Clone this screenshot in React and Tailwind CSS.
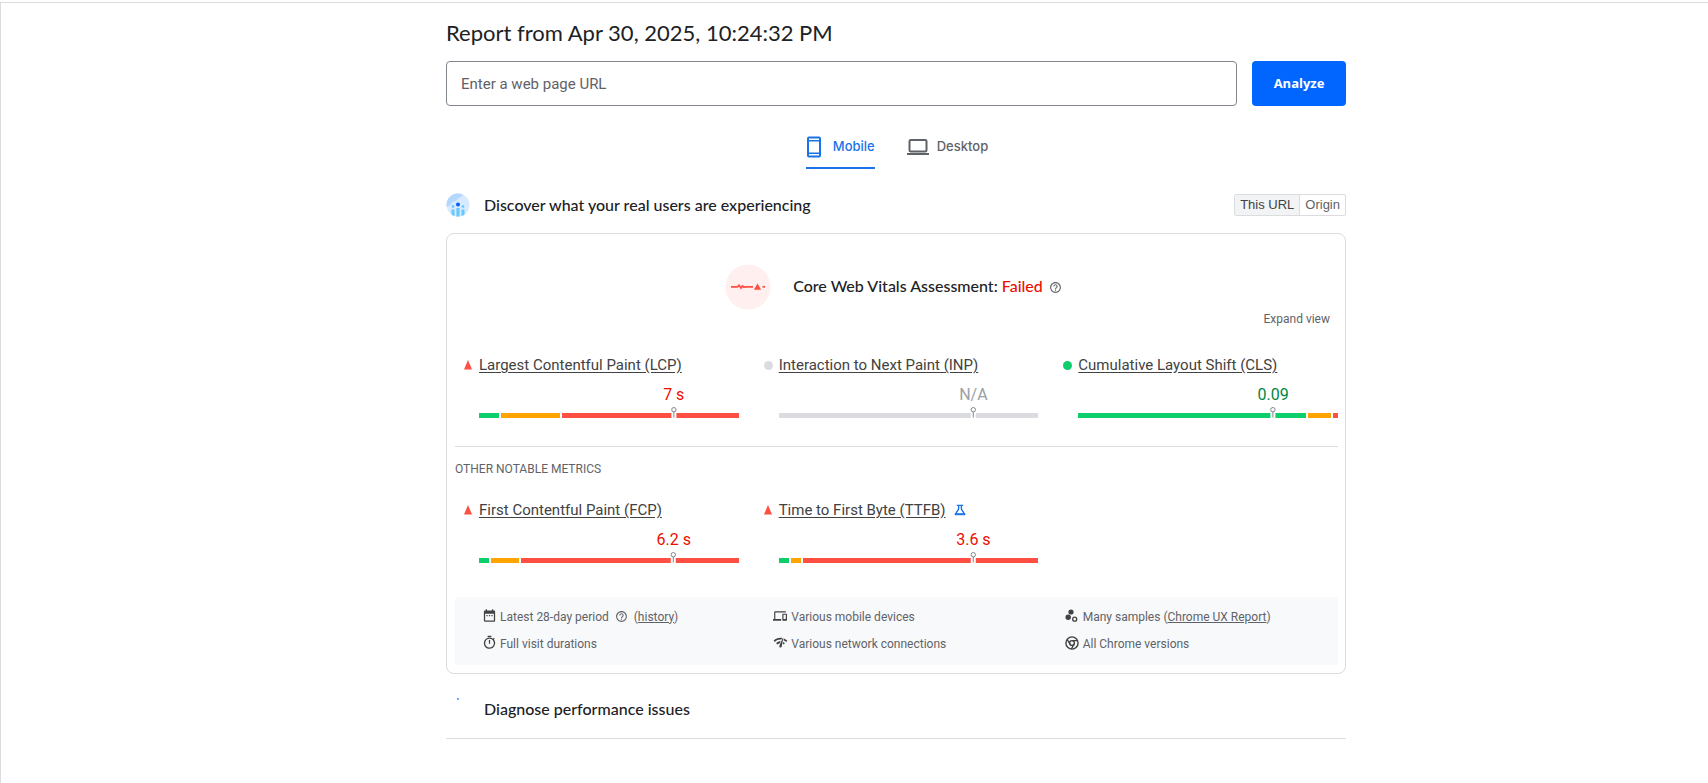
import React, { useState } from 'react';
import { MdDateRange, MdDevices, MdHelpOutline, MdNetworkCheck, MdOutlineTimer } from 'react-icons/md';

const coreMetrics = [
  { name: 'Largest Contentful Paint (LCP)', value: '7 s', rating: 'poor', bars: [8, 23, 69] },
  { name: 'Interaction to Next Paint (INP)', value: 'N/A', rating: 'none', bars: [] },
  { name: 'Cumulative Layout Shift (CLS)', value: '0.09', rating: 'good', bars: [89, 9, 2] },
];

const otherMetrics = [
  { name: 'First Contentful Paint (FCP)', value: '6.2 s', rating: 'poor', bars: [4, 11, 85] },
  { name: 'Time to First Byte (TTFB)', value: '3.6 s', rating: 'poor', bars: [4, 4, 92], experimental: true },
];

const barColors = ['bg-[#0cce6b]', 'bg-[#ffa400]', 'bg-[#ff4e42]'];

const valueColors = {
  poor: 'text-[#eb0f00]',
  good: 'text-[#018642]',
  none: 'text-[#9aa0a6]',
};

function MobileIcon() {
  return (
    <svg width="16" height="22" viewBox="0 0 16 22" fill="none" aria-hidden="true">
      <rect x="2" y="1.5" width="12" height="19" rx="1" stroke="#1a73e8" strokeWidth="2" />
      <path d="M2 4.8h12M2 17.2h12" stroke="#1a73e8" strokeWidth="1.6" />
    </svg>
  );
}

function DesktopIcon() {
  return (
    <svg width="22" height="18" viewBox="0 0 22 18" fill="none" aria-hidden="true">
      <rect x="2.5" y="2" width="17" height="11.5" rx="1.2" stroke="#5f6368" strokeWidth="2" />
      <path d="M0 16h22" stroke="#5f6368" strokeWidth="2" />
    </svg>
  );
}

function UsersIcon() {
  return (
    <svg width="24" height="24" viewBox="0 0 24 24" aria-hidden="true">
      <defs>
        <clipPath id="users-clip">
          <circle cx="12" cy="12" r="11.5" />
        </clipPath>
      </defs>
      <g clipPath="url(#users-clip)">
        <rect width="24" height="24" fill="#d8eafe" />
        <path d="M0 14V0h17c0 3-2 4-4 5-2 .5-2 3-5 3.5C5 9 5 13 0 14z" fill="#b3d7fd" />
        <circle cx="12" cy="11.5" r="2" fill="#0b5cff" />
        <circle cx="7" cy="13.5" r="1.3" fill="#5cc4f8" />
        <circle cx="17" cy="13.5" r="1.3" fill="#5cc4f8" />
        <path d="M10.4 15h3.2v9h-3.2zM5.5 16.5h3V24h-3zM15.5 16.5h3V24h-3z" fill="#68c8fa" />
      </g>
    </svg>
  );
}

function VitalsIcon() {
  return (
    <svg width="46" height="46" viewBox="0 0 46 46" fill="none" aria-hidden="true">
      <circle cx="23" cy="23" r="22.5" fill="#ffefee" />
      <path d="M6 22.8h6.5l1.5-1.5 2 2.7 1.5-2 1.5 1.3 1.5-.5H28" stroke="#ff4e42" strokeWidth="1.8" />
      <path d="M32.5 19.5l3.6 6.2h-7.2z" fill="#ff4e42" />
      <path d="M37.5 22.8H40" stroke="#ff4e42" strokeWidth="1.8" />
    </svg>
  );
}

function FlaskIcon() {
  return (
    <svg width="12" height="12" viewBox="0 0 12 12" fill="none" stroke="#1a73e8" strokeWidth="1.4" aria-hidden="true">
      <path d="M2.8 1.4h6.4M4.6 1.5v3.7L1.6 9.8M7.4 1.5v3.7l3 4.6" />
      <path d="M.7 10.2h10.6" strokeWidth="2" />
    </svg>
  );
}

function SamplesIcon() {
  return (
    <svg width="14" height="14" viewBox="0 0 14 14" aria-hidden="true">
      <circle cx="6" cy="3" r="2.6" fill="#424242" />
      <circle cx="3.2" cy="8.3" r="2.7" fill="#424242" />
      <circle cx="9.7" cy="10.2" r="2" fill="none" stroke="#424242" strokeWidth="1.3" />
    </svg>
  );
}

function ChromeIcon() {
  return (
    <svg width="14" height="14" viewBox="0 0 14 14" fill="none" stroke="#424242" strokeWidth="1.4" aria-hidden="true">
      <circle cx="7" cy="7" r="6.1" />
      <circle cx="7" cy="7" r="2.4" />
      <path d="M7 4.6h5.5M5 8.2L2.2 3.5M9 8.2L6.4 13" />
    </svg>
  );
}

function RatingMark({ rating }) {
  if (rating === 'poor') {
    return (
      <svg width="8" height="10" viewBox="0 0 8 10" aria-hidden="true">
        <path d="M4 0l4 9.5H0z" fill="#ff4e42" />
      </svg>
    );
  }
  return <span className={`size-[9px] rounded-full ${rating === 'good' ? 'bg-[#0cce6b]' : 'bg-[#dadce0]'}`} />;
}

// One field metric: linked name, percentile value and distribution bar
function Metric({ name, value, rating, bars, experimental }) {
  return (
    <div>
      <div className="flex h-6 items-center">
        <span className="flex w-6 pl-[9px]">
          <RatingMark rating={rating} />
        </span>
        <a href="#metric" className="text-[15px] leading-6 text-[#424242] underline underline-offset-2">{name}</a>
        {experimental && <span className="ml-2"><FlaskIcon /></span>}
      </div>
      <div className="relative ml-6 pt-9">
        <div className="absolute top-0 left-3/4 flex -translate-x-1/2 flex-col items-center">
          <span className={`pt-1.5 text-base leading-6 whitespace-nowrap ${valueColors[rating]}`}>{value}</span>
          <svg width="7" height="11" viewBox="0 0 7 11" fill="none" aria-hidden="true">
            <path d="M1 5h5v6H1z" fill="#fff" />
            <circle cx="3.5" cy="2.7" r="2.2" fill="#fff" stroke="#80868b" />
            <path d="M3.5 5v5.5" stroke="#80868b" />
          </svg>
        </div>
        <div className="flex h-[5px] gap-0.5">
          {bars.length === 0 && <div className="flex-1 bg-[#dadce0]" />}
          {bars.map((share, i) => (
            <div key={barColors[i]} className={barColors[i]} style={{ flexGrow: share, flexBasis: 0 }} />
          ))}
        </div>
      </div>
    </div>
  );
}

function Fact({ icon, children }) {
  return (
    <li className="flex h-[27px] items-center gap-1">
      <span className="flex w-[14px] justify-center pb-0.5 text-[#424242] *:shrink-0">{icon}</span>
      <span className="flex items-center">{children}</span>
    </li>
  );
}

export default function App() {
  const [url, setUrl] = useState('');

  return (
    <div className="min-h-screen bg-white pt-0.5 font-['Roboto',sans-serif] text-[#202124]">
      <div className="min-h-[calc(100vh-2px)] border-t border-l border-[#dadce0] pl-[83px]">
        <main className="mx-auto max-w-[900px]">
          <h1 className="pt-4 font-['Lato',sans-serif] text-[22px] leading-7">Report from Apr 30, 2025, 10:24:32 PM</h1>

          <form className="mt-[14px] flex gap-[15px]" onSubmit={(e) => e.preventDefault()}>
            <input
              type="url"
              aria-label="Enter a web page URL"
              placeholder="Enter a web page URL"
              value={url}
              onChange={(e) => setUrl(e.target.value)}
              className="h-[45px] min-w-0 flex-1 rounded border border-[#80868b] px-[14px] text-[15px] placeholder:text-[#5f6368]"
            />
            <button type="submit" className="w-[94px] rounded bg-[#0066ff] font-['Open_Sans',sans-serif] text-[13px] font-bold text-white">
              Analyze
            </button>
          </form>

          <div role="tablist" className="mt-4 flex h-[47px] justify-center gap-8 pl-0.5 font-['Inter',sans-serif] text-[13px] font-medium">
            <button role="tab" aria-selected="true" className="flex items-center gap-[11px] border-b-2 border-[#1a73e8] pt-1 text-[#1a73e8]">
              <MobileIcon />
              Mobile
            </button>
            <button role="tab" aria-selected="false" className="flex items-center gap-2 border-b-2 border-transparent pt-1 text-[#5f6368]">
              <DesktopIcon />
              Desktop
            </button>
          </div>

          <div className="mt-6 flex items-center justify-between">
            <div className="flex items-center gap-[14px]">
              <UsersIcon />
              <h2 className="font-['Lato',sans-serif] text-base font-medium">Discover what your real users are experiencing</h2>
            </div>
            <div className="flex h-[22px] rounded-xs border border-[#dadce0] font-['Liberation_Sans',sans-serif] text-[13px] leading-5 text-[#5f6368]">
              <button className="border-r border-[#dadce0] bg-[#f1f3f4] px-[5px] text-[#424242]">This URL</button>
              <button className="px-[5px]">Origin</button>
            </div>
          </div>

          <section className="mt-4 rounded-lg border border-[#dadce0] p-2 pr-[7px]">
            <div className="flex items-center justify-center pt-[22px] pr-1.5">
              <VitalsIcon />
              <h3 className="ml-[22px] pb-0.5 font-['Lato',sans-serif] text-base font-medium">
                Core Web Vitals Assessment: <span className="text-[#eb0f00]">Failed</span>
              </h3>
              <MdHelpOutline className="ml-1.5 text-[#5f6368]" size={13} />
            </div>
            <div className="flex justify-end pt-px pr-2">
              <button className="text-xs leading-4 text-[#5f6368]">Expand view</button>
            </div>

            <div className="mt-[26px] grid grid-cols-3 gap-x-4 border-b border-[#dadce0] pb-7">
              {coreMetrics.map((metric) => <Metric key={metric.name} {...metric} />)}
            </div>
            <h4 className="mt-[14px] text-xs leading-4 text-[#5f6368]">OTHER NOTABLE METRICS</h4>
            <div className="mt-[21px] grid grid-cols-3 gap-x-4">
              {otherMetrics.map((metric) => <Metric key={metric.name} {...metric} />)}
            </div>

            <ul className="mt-[34px] grid grid-cols-3 gap-x-[18px] rounded-xs bg-[#f8f9fb] pt-1.5 pb-2 pl-[27px] text-xs text-[#5f6368]">
              <Fact icon={<MdDateRange size={15} />}>
                Latest 28-day period
                <MdHelpOutline className="mx-1.5" size={13} />
                (<a href="#history" className="underline">history</a>)
              </Fact>
              <Fact icon={<MdDevices size={14} />}>Various mobile devices</Fact>
              <Fact icon={<SamplesIcon />}>
                <span>Many samples (<a href="#report" className="underline">Chrome UX Report</a>)</span>
              </Fact>
              <Fact icon={<MdOutlineTimer size={15} />}>Full visit durations</Fact>
              <Fact icon={<MdNetworkCheck size={15} />}>Various network connections</Fact>
              <Fact icon={<ChromeIcon />}>All Chrome versions</Fact>
            </ul>
          </section>

          <section className="flex border-b border-[#dadce0] pt-[23px] pb-[17px]">
            <span className="flex w-[38px] pt-px pl-[11px]">
              <span className="size-[2px] rounded-full bg-[#4285f4]" />
            </span>
            <h2 className="font-['Lato',sans-serif] text-base font-medium">Diagnose performance issues</h2>
          </section>
        </main>
      </div>
    </div>
  );
}
